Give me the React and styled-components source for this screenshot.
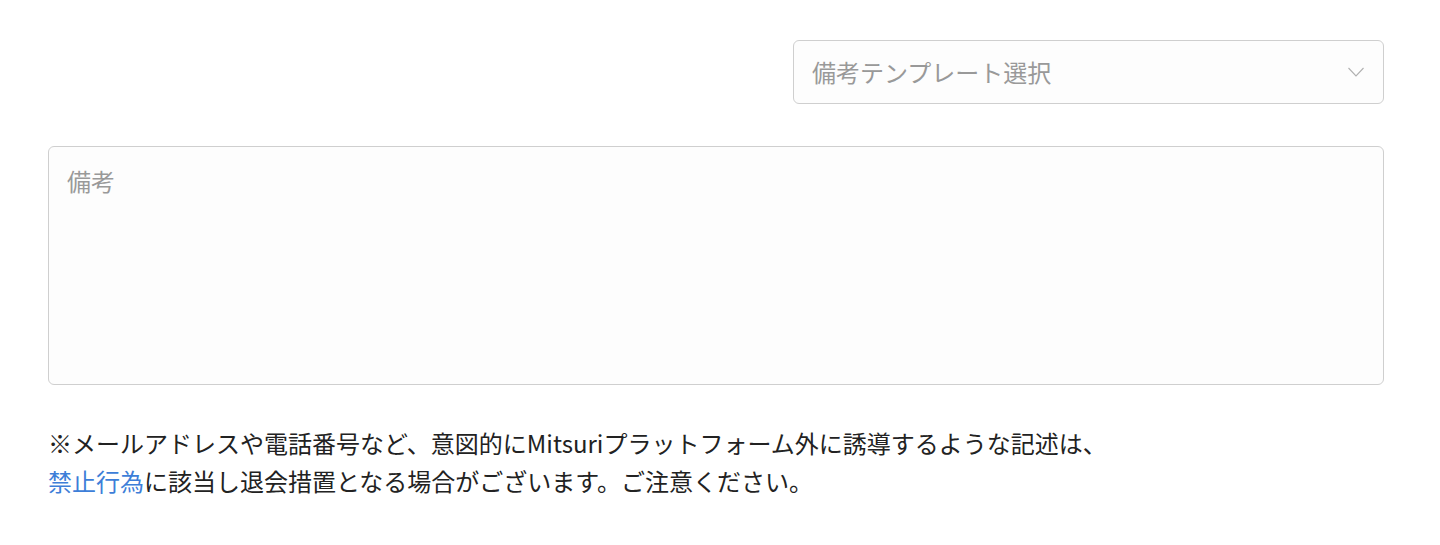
import styled, { createGlobalStyle } from "styled-components";

const GlobalStyle = createGlobalStyle`
  body {
    margin: 0;
    background: #fff;
    font-family: "Noto Sans CJK JP", "Noto Sans", sans-serif;
    color: #222;
  }
`;

const Page = styled.div`
  padding: 40px 56px 40px 48px;
  display: flex;
  flex-direction: column;
`;

const SelectRow = styled.div`
  display: flex;
  justify-content: flex-end;
  margin-bottom: 42px;
`;

const SelectBox = styled.div`
  width: 591px;
  height: 64px;
  box-sizing: border-box;
  border: 1px solid #cfcfcf;
  border-radius: 6px;
  background: #fdfdfd;
  display: flex;
  align-items: center;
  justify-content: space-between;
  padding: 0 18px 0 18px;
`;

const Placeholder = styled.span`
  font-size: 24px;
  color: #999;
  line-height: 1;
`;

const TextArea = styled.textarea`
  display: block;
  width: 100%;
  height: 239px;
  box-sizing: border-box;
  border: 1px solid #cfcfcf;
  border-radius: 6px;
  background: #fdfdfd;
  padding: 16px 18px;
  font-family: inherit;
  font-size: 24px;
  line-height: 36px;
  resize: none;
  outline: none;
  color: #222;

  &::placeholder {
    color: #999;
  }
`;

const Note = styled.p`
  margin: 39px 0 0;
  font-size: 24px;
  line-height: 38px;
  color: #222;
`;

const Link = styled.a`
  color: #3d7ed8;
  text-decoration: none;
`;

const Chevron = () => (
  <svg width="18" height="12" viewBox="0 0 18 12" fill="none">
    <path d="M1.5 2 L9 10 L16.5 2" stroke="#b0b0b0" strokeWidth="1.1" />
  </svg>
);

export default function App() {
  return (
    <>
      <GlobalStyle />
      <Page>
        <SelectRow>
          <SelectBox>
            <Placeholder>備考テンプレート選択</Placeholder>
            <Chevron />
          </SelectBox>
        </SelectRow>
        <TextArea placeholder="備考" />
        <Note>
          ※メールアドレスや電話番号など、意図的にMitsuriプラットフォーム外に誘導するような記述は、
          <br />
          <Link href="#">禁止行為</Link>
          に該当し退会措置となる場合がございます。ご注意ください。
        </Note>
      </Page>
    </>
  );
}
